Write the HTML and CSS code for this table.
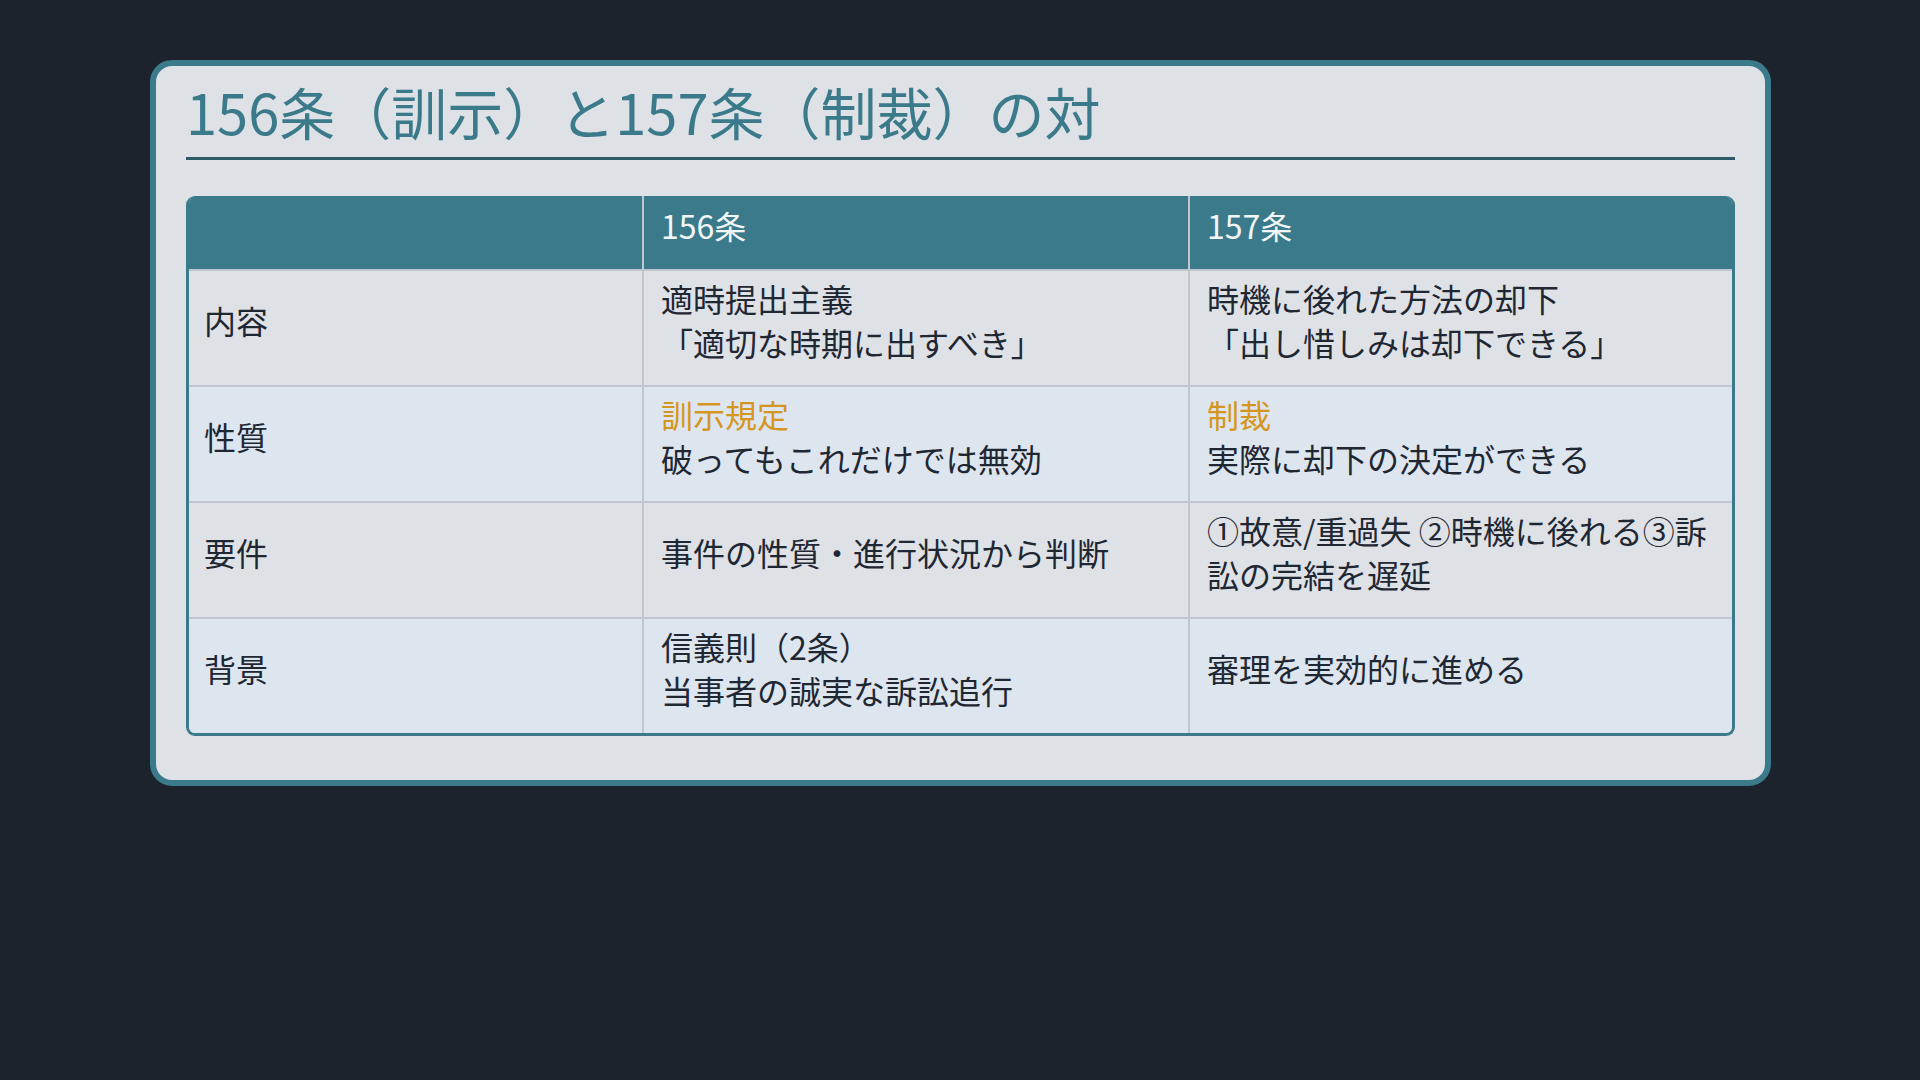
FILE: index.html
```html
<!DOCTYPE html>
<html lang="ja">
<head>
<meta charset="utf-8">
<title>156条と157条の対比</title>
<link rel="stylesheet" href="styles.css">
</head>
<body>
<main class="card">
  <h1 class="title">156条（訓示）と157条（制裁）の対</h1>
  <div class="table-wrap">
    <table class="cmp">
      <colgroup>
        <col class="c-label">
        <col class="c-a">
        <col class="c-b">
      </colgroup>
      <thead>
        <tr><th></th><th>156条</th><th>157条</th></tr>
      </thead>
      <tbody>
        <tr>
          <td>内容</td>
          <td>適時提出主義<br>「適切な時期に出すべき」</td>
          <td>時機に後れた方法の却下<br>「出し惜しみは却下できる」</td>
        </tr>
        <tr class="alt">
          <td>性質</td>
          <td><span class="hl">訓示規定</span><br>破ってもこれだけでは無効</td>
          <td><span class="hl">制裁</span><br>実際に却下の決定ができる</td>
        </tr>
        <tr>
          <td>要件</td>
          <td>事件の性質・進行状況から判断</td>
          <td>①故意/重過失 ②時機に後れる③訴訟の完結を遅延</td>
        </tr>
        <tr class="alt">
          <td>背景</td>
          <td>信義則（2条）<br>当事者の誠実な訴訟追行</td>
          <td>審理を実効的に進める</td>
        </tr>
      </tbody>
    </table>
  </div>
</main>
</body>
</html>
```

FILE: styles.css
```css
html, body {
  margin: 0;
  padding: 0;
  background: #1c232d;
}
body {
  padding: 60px 149px 0 150px;
  font-family: "Noto Sans CJK JP", "Noto Sans", sans-serif;
  color: #1f2733;
}
.card {
  background: #dee1e6;
  border: 6px solid #3b7a8a;
  border-radius: 22px;
  padding: 8px 30px 45px 30px;
  box-sizing: border-box;
  height: 726px;
}
.title {
  margin: 0;
  font-size: 56px;
  font-weight: 400;
  line-height: 73px;
  color: #3b7a8a;
  padding-bottom: 10px;
  border-bottom: 3px solid #2e5a67;
  white-space: nowrap;
}
.table-wrap {
  margin-top: 36px;
  border: 3px solid #3b7a8a;
  border-top: 0;
  border-radius: 9px;
  overflow: hidden;
}
.cmp {
  width: 100%;
  border-collapse: collapse;
  table-layout: fixed;
  font-size: 32px;
  line-height: 44px;
}
.c-label { width: 454px; }
.c-a { width: 546px; }
.cmp th, .cmp td {
  padding: 5px 17px 21px 17px;
  text-align: left;
  vertical-align: middle;
  font-weight: 400;
  border-left: 2px solid #c0c6cf;
  border-top: 2px solid #c0c6cf;
}
.cmp th:first-child, .cmp td:first-child {
  border-left: 0;
  padding-left: 15px;
}
.cmp thead th {
  background: #3b7a8b;
  color: #f2f6f7;
  border-top: 0;
  height: 47px;
}
.cmp td {
  background: #dee1e6;
  height: 88px;
}
.cmp tr.alt td {
  background: #dde5ee;
}
.hl {
  color: #d4961e;
}
```
